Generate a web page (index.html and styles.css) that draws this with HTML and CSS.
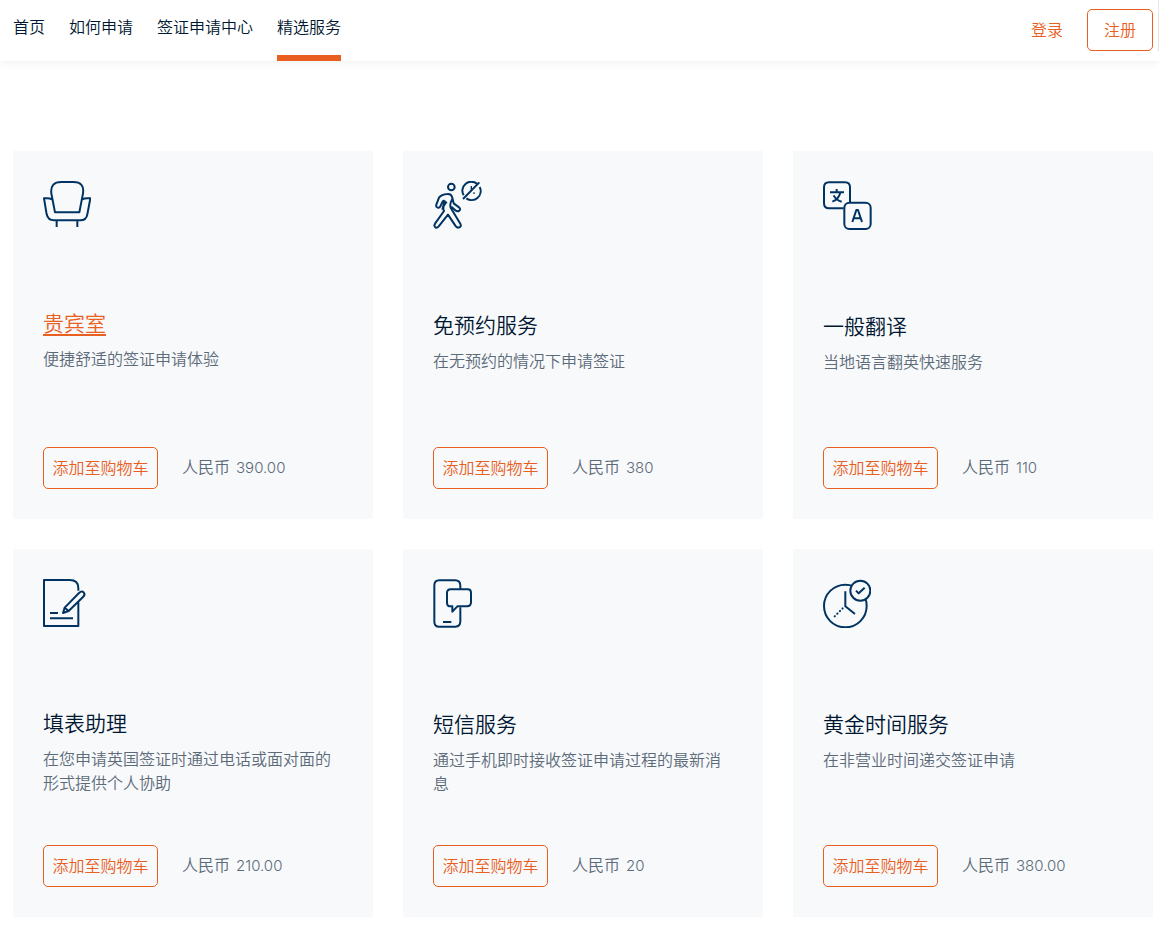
FILE: index.html
```html
<!DOCTYPE html>
<html lang="zh-CN">
<head>
<meta charset="utf-8">
<meta name="viewport" content="width=device-width, initial-scale=1">
<title>精选服务</title>
<link rel="stylesheet" href="styles.css">
</head>
<body>
<header class="header">
  <nav class="nav">
    <a class="nav-link" href="#">首页</a>
    <a class="nav-link" href="#">如何申请</a>
    <a class="nav-link" href="#">签证申请中心</a>
    <a class="nav-link active" href="#" aria-current="page">精选服务</a>
  </nav>
  <div class="account">
    <a class="login" href="#">登录</a>
    <button class="button register" type="button">注册</button>
  </div>
</header>
<main class="services">
  <article class="card">
    <svg class="icon" width="48" height="46" viewBox="39 48 144 138" aria-hidden="true"><path d="M75 142L64 85Q60 51 94 51H130Q164 51 159 85L148 142ZM66 103Q58 98 42 100L50 148Q54 166 72 166H151Q169 166 172 148L181 100Q164 98 157 103M80 167V186M142 167V186"/></svg>
    <h2 class="title"><a class="title-link" href="#">贵宾室</a></h2>
    <p class="text">便捷舒适的签证申请体验</p>
    <div class="actions"><button class="button" type="button">添加至购物车</button><span class="price">人民币 <span class="amount">390.00</span></span></div>
  </article>
  <article class="card">
    <svg class="icon" width="50" height="48" viewBox="39 48 150 144" aria-hidden="true"><circle cx="94" cy="66" r="10"/><path d="M82 87Q94 86 97 98L101 115L118 128Q123 134 117 138Q112 140 106 136L94 125M82 87Q64 88 57 98L49 119Q47 126 53 128Q59 129 61 124L68 109L74 106M80 110L72 121Q68 130 72 138L45 176Q41 183 46 187Q51 190 56 184L84 149L106 182Q111 190 118 187Q125 184 121 176L92 128Q88 117 97 102M74 106L67 134M131 91A27 27 0 0 1 171 56M179 66A27 27 0 0 1 139 100M129 102L178 52"/><path class="fine" d="M154 63V78M162 82V87"/></svg>
    <h2 class="title">免预约服务</h2>
    <p class="text">在无预约的情况下申请签证</p>
    <div class="actions"><button class="button" type="button">添加至购物车</button><span class="price">人民币 <span class="amount">380</span></span></div>
  </article>
  <article class="card">
    <svg class="icon" width="49" height="49" viewBox="39 48 147 147" aria-hidden="true"><path d="M101 130H57Q42 130 42 115V67Q42 52 57 52H105Q120 52 120 67V112"/><rect x="103" y="113" width="79" height="79" rx="15"/><path d="M60 82H102M80 72V82M71 91Q78 105 95 110M91 83Q85 104 67 110M127 171L139 135H144L156 171M131 160H152"/></svg>
    <h2 class="title">一般翻译</h2>
    <p class="text">当地语言翻英快速服务</p>
    <div class="actions"><button class="button" type="button">添加至购物车</button><span class="price">人民币 <span class="amount">110</span></span></div>
  </article>
  <article class="card">
    <svg class="icon" width="48" height="48" viewBox="39 42 144 144" aria-hidden="true"><path d="M145 77V69Q145 45 119 45H42V183H145V110M60 144H84M60 160H129M99 144L104 128L147 84Q155 76 161 82Q167 88 159 96L116 138ZM104 128L116 138"/></svg>
    <h2 class="title">填表助理</h2>
    <p class="text">在您申请英国签证时通过电话或面对面的形式提供个人协助</p>
    <div class="actions"><button class="button" type="button">添加至购物车</button><span class="price">人民币 <span class="amount">210.00</span></span></div>
  </article>
  <article class="card">
    <svg class="icon" width="48" height="49" viewBox="39 42 144 147" aria-hidden="true"><path d="M121 72V62Q121 46 105 46H58Q43 46 43 61V170Q43 185 58 185H106Q121 185 121 169V127M69 171H94"/><path class="filled" d="M92 73H143Q153 73 153 83V112Q153 124 141 124H112L97 140V124H92Q81 124 81 113V84Q81 73 92 73Z"/></svg>
    <h2 class="title">短信服务</h2>
    <p class="text">通过手机即时接收签证申请过程的最新消息</p>
    <div class="actions"><button class="button" type="button">添加至购物车</button><span class="price">人民币 <span class="amount">20</span></span></div>
  </article>
  <article class="card">
    <svg class="icon" width="48" height="49" viewBox="39 42 144 147" aria-hidden="true"><circle cx="106" cy="123" r="64"/><path d="M106 79V124L135 147"/><path class="dots" d="M98 130L72 156"/><circle class="filled" cx="151" cy="77" r="30"/><path d="M138 77L146 85L164 68"/></svg>
    <h2 class="title">黄金时间服务</h2>
    <p class="text">在非营业时间递交签证申请</p>
    <div class="actions"><button class="button" type="button">添加至购物车</button><span class="price">人民币 <span class="amount">380.00</span></span></div>
  </article>
</main>
</body>
</html>
```
FILE: styles.css
```css
* {
  box-sizing: border-box;
}

body {
  margin: 0;
  background: #fff;
  color: #001731;
  font-family: "Noto Sans CJK SC", sans-serif;
  font-size: 16px;
  font-weight: 350;
  line-height: 24px;
}

.header {
  display: flex;
  justify-content: space-between;
  align-items: flex-start;
  padding-left: 13px;
  box-shadow: 0 2px 8px rgba(0, 0, 0, 0.06);
}

.nav {
  display: flex;
  gap: 24px;
}

.nav-link {
  padding: 14px 0 17px;
  border-bottom: 6px solid transparent;
  color: inherit;
  text-decoration: none;
}

.nav-link.active {
  border-bottom-color: #e95f1f;
}

.account {
  display: flex;
  align-items: center;
  gap: 24px;
  padding: 9px 5px 0 0;
  border-right: 1px solid #e5e5e5;
}

.login {
  padding-bottom: 2px;
  color: #e95f1f;
  text-decoration: none;
}

.button {
  min-width: 115px;
  height: 42px;
  padding: 0 8px 3px;
  border: 1px solid #e95f1f;
  border-radius: 5px;
  background: transparent;
  color: #e95f1f;
  font: inherit;
  white-space: nowrap;
}

.register {
  min-width: 66px;
}

.services {
  display: grid;
  grid-template-columns: repeat(3, 1fr);
  gap: 30px;
  padding: 90px 6px 20px 13px;
}

.card {
  display: flex;
  flex-direction: column;
  align-items: flex-start;
  min-height: 368px;
  padding: 30px;
  background: #f8f9fb;
}

.icon {
  flex: none;
  fill: none;
  stroke: #003362;
  stroke-width: 6;
  stroke-linecap: butt;
  stroke-linejoin: round;
}

.icon .fine {
  stroke-width: 4;
}

.icon .filled {
  fill: #f8f9fb;
}

.icon .dots {
  stroke-linecap: round;
  stroke-dasharray: 1 10;
}

.title {
  margin: 79px 0 8px;
  font-size: 21px;
  font-weight: 350;
  line-height: 32px;
}

.title-link {
  color: #e95f1f;
  text-underline-offset: 3px;
  text-decoration-thickness: 2px;
}

.text {
  margin: 0;
  color: #5c6b79;
}

.actions {
  display: flex;
  align-items: center;
  gap: 24px;
  margin-top: auto;
}

.price {
  display: flex;
  align-items: baseline;
  gap: 6px;
  padding-bottom: 2px;
  color: #5c6b79;
}

.amount {
  font-family: Inter, sans-serif;
  font-size: 15px;
}
```
